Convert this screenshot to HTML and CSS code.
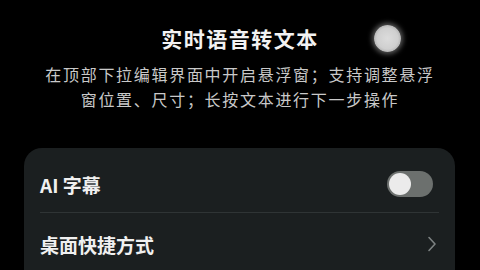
FILE: index.html
```html
<!DOCTYPE html>
<html lang="zh-CN">
<head>
    <meta charset="UTF-8">
    <meta name="viewport" content="width=device-width, initial-scale=1.0">
    <title>实时语音转文本</title>
    <link rel="stylesheet" href="styles.css">
</head>
<body>

    <!-- Header -->
    <div class="header">
        <h1 class="title">实时语音转文本</h1>
        <span class="float-ball"></span>
        <p class="desc">在顶部下拉编辑界面中开启悬浮窗；支持调整悬浮<br>窗位置、尺寸；长按文本进行下一步操作</p>
    </div>

    <!-- Settings Card -->
    <div class="card">
        <div class="row row-first">
            <span class="row-label">AI 字幕</span>
            <span class="switch"><span class="knob"></span></span>
        </div>
        <div class="divider"></div>
        <div class="row row-last">
            <span class="row-label">桌面快捷方式</span>
            <svg class="chevron" width="10" height="16" viewBox="0 0 10 16">
                <path d="M2 1.5 L8 8 L2 14.5" fill="none" stroke="#7d8282" stroke-width="1.6" stroke-linecap="round" stroke-linejoin="round"/>
            </svg>
        </div>
    </div>

</body>
</html>
```

FILE: styles.css
```css
/* General Reset */
* {
    margin: 0;
    padding: 0;
    box-sizing: border-box;
    font-family: 'Noto Sans CJK SC', 'Noto Sans', sans-serif;
}

body {
    width: 480px;
    height: 270px;
    background-color: #000;
    color: #f0f0f0;
    overflow: hidden;
}

/* Header */
.header {
    position: relative;
    padding-top: 24px;
    text-align: center;
}

.title {
    font-size: 21px;
    line-height: 28px;
    font-weight: 700;
    letter-spacing: 1.5px;
    color: #f2f2f2;
}

.float-ball {
    position: absolute;
    left: 374px;
    top: 25px;
    width: 27px;
    height: 27px;
    border-radius: 50%;
    background: radial-gradient(circle, #dcdcdc 0%, #cfcfcf 55%, #a8a8a8 80%, #6a6a6a 100%);
    box-shadow: 0 0 5px 2px rgba(200, 200, 200, 0.45);
}

.desc {
    margin-top: 10px;
    font-size: 16px;
    line-height: 24.5px;
    letter-spacing: 1.7px;
    color: #c9c9c9;
}

/* Settings Card */
.card {
    margin: 37px 25px 0 24px;
    padding: 8px 16px 0 16px;
    background-color: #1b1f20;
    border-radius: 18px 18px 0 0;
    height: 122px;
}

.row {
    display: flex;
    align-items: center;
    justify-content: space-between;
}

.row-first {
    height: 56px;
}

.row-last {
    height: 62px;
}

.row-label {
    font-size: 19px;
    font-weight: 600;
    color: #f0f0f0;
}

.divider {
    height: 1px;
    background-color: #2f3435;
}

/* Toggle Switch */
.switch {
    display: flex;
    align-items: center;
    width: 46px;
    height: 26px;
    padding: 2px;
    margin-right: 6px;
    border-radius: 13px;
    background-color: #6c706e;
}

.knob {
    width: 22px;
    height: 22px;
    border-radius: 50%;
    background-color: #ebebeb;
}

.chevron {
    margin-right: 2px;
}
```
